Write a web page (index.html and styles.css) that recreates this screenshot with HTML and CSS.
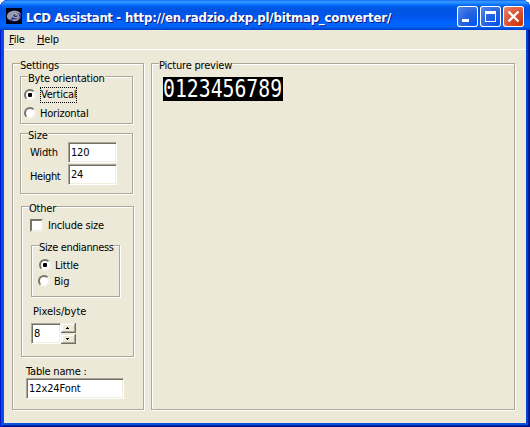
FILE: index.html
```html
<!DOCTYPE html>
<html lang="en">
<head>
<meta charset="utf-8">
<title>LCD Assistant</title>
<link rel="stylesheet" href="styles.css">
</head>
<body>
<div class="window">
  <header class="titlebar">
    <svg class="app-icon" width="16" height="16" viewBox="0 0 16 16">
      <rect width="16" height="16" fill="#000018"/>
      <ellipse cx="8" cy="8" rx="7.3" ry="5.6" fill="#282e8c"/>
      <path d="M1 9C1 4 6 2 11 3Q15 4 14.500 7Q13 4 9 5Q6 6 6 10L4 12Q1 11 1 9" fill="#9a9ca6"/>
      <path d="M4 11Q9 13 14 8Q14 14 7 13" fill="#8b8e9c"/>
      <ellipse cx="9.500" cy="7.500" rx="3.500" ry="2.700" fill="#a1a3b5"/>
      <ellipse cx="9.500" cy="7.500" rx="2" ry="1.600" fill="#22276c"/>
      <path d="M9 7h2" stroke="#ddd"/>
    </svg>
    <h1><span class="t-name">LCD Assistant -</span><span class="t-url">http://en.radzio.dxp.pl/bitmap_converter/</span></h1>
    <div class="controls">
      <svg class="ctl" viewBox="0 0 21 21"><rect x="5" y="13" width="7" height="3" fill="#fff"/></svg>
      <svg class="ctl" viewBox="0 0 21 21"><path d="M5 5h11v11H5zM6 8v7h9V8z" fill="#fff" fill-rule="evenodd"/></svg>
      <svg class="ctl close" viewBox="0 0 21 21"><path d="M5.500 5.500l10 10M15.500 5.500l-10 10" stroke="#fff" stroke-width="2.300"/></svg>
    </div>
  </header>
  <nav class="menu"><span class="m-file"><u>F</u>ile</span><span class="m-help"><u>H</u>elp</span></nav>
  <main class="client">
    <section class="group settings">
      <h2 class="legend l-settings">Settings</h2>
      <section class="group byte">
        <h3 class="legend l-byte">Byte orientation</h3>
        <div class="row r-vertical"><i class="radio on"></i><span class="focus t-vertical">Vertical</span></div>
        <div class="row r-horizontal"><i class="radio"></i><span class="t-horizontal">Horizontal</span></div>
      </section>
      <section class="group size">
        <h3 class="legend l-size">Size</h3>
        <div class="field"><label class="t-width">Width</label><span class="input">120</span></div>
        <div class="field"><label class="t-height">Height</label><span class="input">24</span></div>
      </section>
      <section class="group other">
        <h3 class="legend l-other">Other</h3>
        <div class="row r-include"><i class="check"></i><span class="t-include">Include size</span></div>
        <section class="group endian">
          <h4 class="legend l-endian">Size endianness</h4>
          <div class="row r-little"><i class="radio on"></i><span class="t-little">Little</span></div>
          <div class="row r-big"><i class="radio"></i><span class="t-big">Big</span></div>
        </section>
        <div class="pixels t-pixels">Pixels/byte</div>
        <div class="stepper">
          <span class="input">8</span>
          <div class="spin">
            <svg class="btn" viewBox="0 0 15 10"><path d="M6 4h1v1h1v1H5V5h1z"/></svg>
            <svg class="btn" viewBox="0 0 15 10"><path d="M5 4h3v1H7v1H6V5H5z"/></svg>
          </div>
        </div>
      </section>
      <div class="table-label t-table">Table name :</div>
      <span class="input table-input">12x24Font</span>
    </section>
    <section class="group preview">
      <h2 class="legend l-preview">Picture preview</h2>
      <div class="bitmap"><span>0123456789</span></div>
    </section>
  </main>
</div>
</body>
</html>
```
FILE: styles.css
```css
* { box-sizing: border-box; }
body { margin: 0; background: #fff; font: 11px/13px "DejaVu Sans Condensed", "DejaVu Sans", sans-serif; letter-spacing: -0.2px; color: #000; }
h1, h2, h3, h4 { margin: 0; font: inherit; }
.window {
  width: 530px; height: 427px; display: flex; flex-direction: column;
  padding: 0 4px 4px; border-radius: 8px 8px 0 0; overflow: hidden;
  background: #0831d9;
  box-shadow: inset 1px 0 #0019cf, inset -1px -1px #00138c, inset 3px 0 #0a48e6, inset -2px -2px #001ea0, inset 4px -4px #0855dd, inset -4px 0 #0441d8;
}
.titlebar {
  height: 30px; flex: none; margin: 0 -4px; padding: 0 6px; display: flex; align-items: flex-start;
  background: linear-gradient(#0058ee 0, #3593ff 1px, #288eff 3px, #127dff 4px, #036ffc 5px, #0262ee 6px, #0057e5 8px, #0054e3 12px, #0055eb 16px, #005bf5 19px, #0066ff 24px, #0062f5 27px, #0049d5 29px, #0043cf 30px);
}
.app-icon { margin-top: 8px; flex: none; }
h1 { display: flex; margin: 9px 0 0 4px; font: bold 13px/17px "DejaVu Sans Condensed", sans-serif; color: #fff; text-shadow: 1px 1px #0a1883; white-space: pre; }
.t-name { width: 99px; letter-spacing: -0.35px; }
.t-url { letter-spacing: -0.17px; }
.controls { display: flex; gap: 2px; margin: 6px 0 0 auto; }
.ctl { width: 21px; height: 21px; border-radius: 3px; background: radial-gradient(circle at 90% 90%, #0052f3 0, #2663df 50%, #6f9aef 115%); box-shadow: inset 0 0 0 1px #fff; }
.close { background: radial-gradient(circle at 90% 90%, #cc3300 0, #dc5030 50%, #efa28b 115%); }
.menu { height: 20px; flex: none; display: flex; padding: 3px 5px; background: #ece9d8; border-bottom: 1px solid #fff; }
.m-file { width: 28px; }
u { text-underline-offset: 1px; }
.client { flex: 1; display: flex; gap: 7px; padding: 13px 11px 13px 8px; background: #ece9d8; }
.group { border: 1px solid #aca899; box-shadow: 1px 1px #fff, inset 1px 1px #fff; }
.legend { width: max-content; height: 13px; margin: -5px 0 0 7px; background: #ece9d8; white-space: pre; }
.settings { width: 132px; }
.preview { flex: 1; }
.byte { width: 113px; height: 48px; margin: 4px 0 0 7px; }
.row { display: flex; align-items: center; height: 16px; white-space: pre; }
.radio { width: 12px; height: 12px; flex: none; border-radius: 50%; background: #fff; border: 2px solid; border-color: #77746a #f4f2e8 #f4f2e8 #77746a; display: grid; place-items: center; }
.on::after { content: ""; width: 4px; height: 4px; border-radius: 1px; background: #000; }
.r-vertical { margin: 2px 0 0 3px; }
.r-horizontal { margin: 2px 0 0 3px; }
.t-vertical { margin-left: 5px; }
.t-horizontal { margin-left: 4px; }
.focus { outline: 1px dotted #000; width: 35px; height: 14px; }
.size { width: 113px; height: 61px; margin: 9px 0 0 7px; }
.field { display: flex; height: 21px; margin: 0 0 0 9px; align-items: center; }
.field + .field { margin-top: 1px; }
.field label { width: 38px; }
.t-height { padding-top: 3px; letter-spacing: -0.4px; }
.input { display: block; width: 49px; height: 21px; padding: 3px 1px 1px 2px; background: #fff; border: 1px solid; border-color: #aca899 #fff #fff #aca899; box-shadow: inset 1px 1px #716f64, inset -1px -1px #f1efe2; }
.other { width: 113px; height: 151px; margin: 12px 0 0 8px; }
.r-include { margin: 2px 0 0 8px; }
.check { width: 13px; height: 13px; background: #fff; border: 2px solid; border-color: #77746a #f1efe2 #f1efe2 #77746a; }
.t-include { margin-left: 5px; }
.endian { width: 89px; height: 52px; margin: 12px 0 0 9px; }
.l-endian { letter-spacing: -0.35px; }
.r-little { margin: 3px 0 0 7px; }
.r-big { margin: 0 0 0 6px; }
.t-little, .t-big { margin-left: 4px; }
.pixels { margin: 8px 0 0 11px; letter-spacing: 0; }
.stepper { display: flex; margin: 5px 0 0 9px; }
.stepper .input { width: 30px; }
.spin { display: flex; flex-direction: column; gap: 1px; }
.btn { width: 15px; height: 10px; background: #ece9d8; box-shadow: inset -1px -1px #716f64, inset 1px 1px #f1efe2, inset -2px -2px #aca899, inset 2px 2px #fff; }
.table-label { margin: 8px 0 0 13px; white-space: pre; }
.table-input { width: 98px; margin: 0 0 0 13px; letter-spacing: -0.1px; }
.bitmap { width: 120px; height: 24px; margin: 5px 0 0 11px; padding-top: 4px; background: #000; color: #fff; }
.bitmap span { display: block; font: 19.8px/18px "DejaVu Sans Mono", monospace; letter-spacing: 0; transform: scaleY(1.24); }
```
